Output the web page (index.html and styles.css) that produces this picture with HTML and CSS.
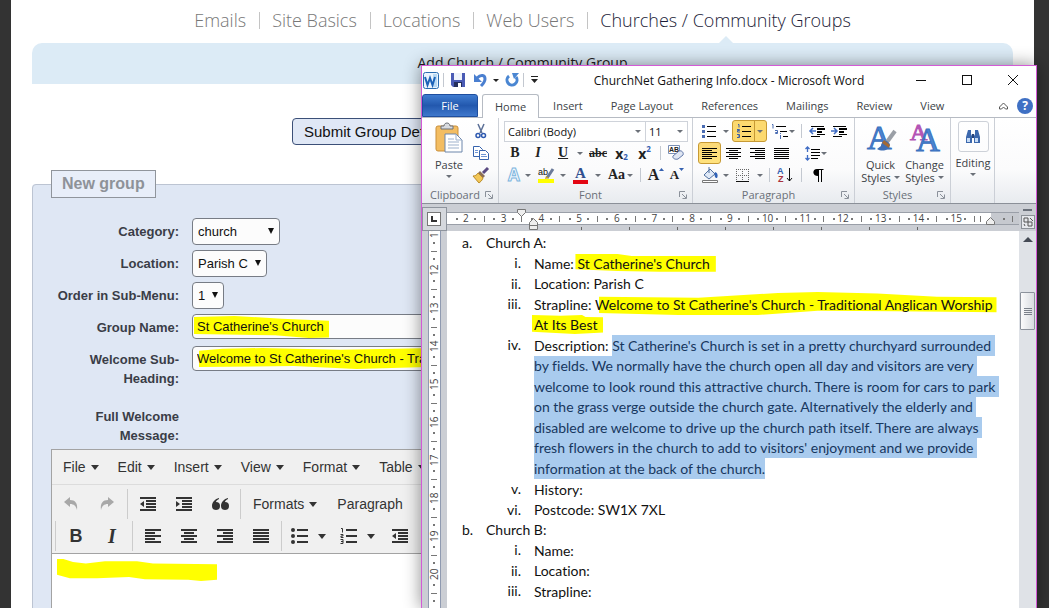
FILE: index.html
```html
<!DOCTYPE html>
<html lang="en">
<head>
  <meta charset="UTF-8" />
  <meta name="viewport" content="width=device-width, initial-scale=1.0" />
  <title>Add Church / Community Group</title>
  <link rel="stylesheet" href="styles.css">
</head>
<body>
  <!-- shared icons -->
  <svg class="sprite" aria-hidden="true">
    <symbol id="left" viewBox="0 0 16 14"><path d="M0 0h16v2H0zM0 3h10v2H0zM0 6h16v2H0zM0 9h10v2H0zM0 12h16v2H0z"/></symbol>
    <symbol id="center" viewBox="0 0 16 14"><path d="M0 0h16v2H0zM3 3h10v2H3zM0 6h16v2H0zM3 9h10v2H3zM0 12h16v2H0z"/></symbol>
    <symbol id="right" viewBox="0 0 16 14"><path d="M0 0h16v2H0zM6 3h10v2H6zM0 6h16v2H0zM6 9h10v2H6zM0 12h16v2H0z"/></symbol>
    <symbol id="full" viewBox="0 0 16 14"><path d="M0 0h16v2H0zM0 3h16v2H0zM0 6h16v2H0zM0 9h16v2H0zM0 12h16v2H0z"/></symbol>
    <symbol id="outdent" viewBox="0 0 16 14"><path d="M0 0h16v2H0zM6 3h10v2H6zM6 6h10v2H6zM6 9h10v2H6zM0 12h16v2H0zM4 4v6L0 7z"/></symbol>
    <symbol id="indent" viewBox="0 0 16 14"><path d="M0 0h16v2H0zM6 3h10v2H6zM6 6h10v2H6zM6 9h10v2H6zM0 12h16v2H0zM0 4v6l4-3z"/></symbol>
    <symbol id="w-left" viewBox="0 0 15 11"><path d="M0 0h15v1H0zM0 2h10v1H0zM0 4h15v1H0zM0 6h10v1H0zM0 8h15v1H0zM0 10h10v1H0z"/></symbol>
    <symbol id="w-center" viewBox="0 0 15 11"><path d="M0 0h15v1H0zM3 2h9v1H3zM0 4h15v1H0zM3 6h9v1H3zM0 8h15v1H0zM3 10h9v1H3z"/></symbol>
    <symbol id="w-right" viewBox="0 0 15 11"><path d="M0 0h15v1H0zM5 2h10v1H5zM0 4h15v1H0zM5 6h10v1H5zM0 8h15v1H0zM5 10h10v1H5z"/></symbol>
    <symbol id="w-full" viewBox="0 0 15 11"><path d="M0 0h15v1H0zM0 2h15v1H0zM0 4h15v1H0zM0 6h15v1H0zM0 8h15v1H0zM0 10h15v1H0z"/></symbol>
    <symbol id="launcher" viewBox="0 0 8 8"><path d="M.5 6V.5H6M3 3l4 4M7.500 3.500v4h-4" fill="none" stroke="#8b919a"/></symbol>
  </svg>

  <div class="page">
    <nav class="site-nav">
      <a href="#">Emails</a>
      <a href="#">Site Basics</a>
      <a href="#">Locations</a>
      <a href="#">Web Users</a>
      <a href="#" class="current">Churches / Community Groups</a>
    </nav>
    <div class="band">Add Church / Community Group</div>

    <form class="group-form">
      <button type="button" class="submit-btn">Submit Group Details</button>

      <fieldset>
        <legend>New group</legend>
        <div class="field">
          <label for="category">Category:</label>
          <span class="select-box category"><select id="category"><option>church</option></select></span>
        </div>
        <div class="field">
          <label for="location">Location:</label>
          <span class="select-box location"><select id="location"><option>Parish C</option></select></span>
        </div>
        <div class="field">
          <label for="order">Order in Sub-Menu:</label>
          <span class="select-box order"><select id="order"><option>1</option></select></span>
        </div>
        <div class="field">
          <label for="groupName">Group Name:</label>
          <span class="text-box name-mark"><input type="text" id="groupName" value="St Catherine's Church"></span>
        </div>
        <div class="field sub-heading">
          <label for="subHeading">Welcome Sub-Heading:</label>
          <span class="text-box heading-mark"><input type="text" id="subHeading" value="Welcome to St Catherine's Church - Traditional Anglican Worship At Its Best"></span>
        </div>
        <div class="field">
          <label for="message">Full Welcome Message:</label>
        </div>

        <div class="editor">
          <div class="menubar">
            <button type="button">File<i class="caret"></i></button>
            <button type="button">Edit<i class="caret"></i></button>
            <button type="button">Insert<i class="caret"></i></button>
            <button type="button">View<i class="caret"></i></button>
            <button type="button">Format<i class="caret"></i></button>
            <button type="button">Table<i class="caret"></i></button>
          </div>
          <div class="toolbar">
            <div class="tools">
              <div class="tool-group">
                <button type="button" class="off" aria-label="Undo"><svg width="14" height="14" viewBox="0 0 14 14"><path d="M0 5l6-5v3c5 0 8 3 7 10-1-4-3-6-7-6v3z"/></svg></button>
                <button type="button" class="off" aria-label="Redo"><svg width="14" height="14" viewBox="0 0 14 14"><path d="M14 5L8 0v3C3 3 0 6 1 13c1-4 3-6 7-6v3z"/></svg></button>
              </div>
              <div class="tool-group">
                <button type="button" aria-label="Decrease indent"><svg width="16" height="14"><use href="#outdent"/></svg></button>
                <button type="button" aria-label="Increase indent"><svg width="16" height="14"><use href="#indent"/></svg></button>
                <button type="button" aria-label="Quote"><svg width="17" height="12" viewBox="0 0 17 12"><path d="M7 0C3 1 0 4 0 8a4 4 0 1 0 4-4c0-1 1-2 3-3zM16 0c-4 1-7 4-7 8a4 4 0 1 0 4-4c0-1 1-2 3-3z"/></svg></button>
              </div>
              <div class="tool-group">
                <button type="button" class="text">Formats<i class="caret"></i></button>
                <button type="button" class="text block-format">Paragraph<i class="caret"></i></button>
              </div>
            </div>
            <div class="tools second">
              <div class="tool-group">
                <button type="button" class="bold">B</button>
                <button type="button" class="italic">I</button>
              </div>
              <div class="tool-group">
                <button type="button" aria-label="Align left"><svg width="16" height="14"><use href="#left"/></svg></button>
                <button type="button" aria-label="Align center"><svg width="16" height="14"><use href="#center"/></svg></button>
                <button type="button" aria-label="Align right"><svg width="16" height="14"><use href="#right"/></svg></button>
                <button type="button" aria-label="Justify"><svg width="16" height="14"><use href="#full"/></svg></button>
              </div>
              <div class="tool-group">
                <button type="button" class="split" aria-label="Bullet list"><svg width="17" height="16" viewBox="0 0 17 16"><circle cx="2" cy="2" r="2"/><circle cx="2" cy="8" r="2"/><circle cx="2" cy="14" r="2"/><path d="M6 1h11v2H6zM6 7h11v2H6zM6 13h11v2H6z"/></svg><i class="caret"></i></button>
                <button type="button" class="split" aria-label="Numbered list"><svg width="17" height="16" viewBox="0 0 17 16"><path d="M6 1h11v2H6zM6 7h11v2H6zM6 13h11v2H6z"/><path d="M1 .5h1.500v4M.5 6.500h2.500v1.500H1v1.500h2.500M.5 11.500h2.500v4H.5M1 13.500h2" fill="none" stroke="#333"/></svg><i class="caret"></i></button>
                <button type="button" aria-label="Decrease indent"><svg width="16" height="14"><use href="#outdent"/></svg></button>
              </div>
            </div>
          </div>
          <div class="editor-body" id="message"><div class="swipe"></div></div>
        </div>
      </fieldset>
    </form>
  </div>

  <div class="word">
    <div class="titlebar">
      <div class="quick">
        <svg width="16" height="17" viewBox="0 0 16 17"><rect x=".5" y=".5" width="15" height="16" rx="2" fill="#eaf4fd" stroke="#2a6db0"/><rect x="10" y="2" width="4" height="13" fill="#b9daf3"/><path d="M2 5l2.500 8L7 6l2.500 7L12 5" fill="none" stroke="#1c63b8" stroke-width="2"/></svg>
        <i class="bar"></i>
        <svg width="14" height="14" viewBox="0 0 14 14"><path d="M0 0h14v14H2l-2-2z" fill="#4a5bb5"/><path d="M3 0h8v7H3z" fill="#eef3fb"/><path d="M3 9h8v5H3z" fill="#252f5c"/><path d="M7 10h3v4H7z" fill="#fff"/></svg>
        <svg class="undo" width="13" height="14" viewBox="0 0 13 14"><path d="M3 5c4-4 8-3 8 1 0 3-2 5-4 7" fill="none" stroke="#4a7fd0" stroke-width="3"/><path d="M0 1v8h8z" fill="#4a7fd0"/></svg>
        <i class="caret black"></i>
        <svg class="redo" width="13" height="14" viewBox="0 0 13 14"><path d="M3 3a5 5 0 1 0 7 1" fill="none" stroke="#4a86d2" stroke-width="3"/><path d="M6 0h7l-5 6z" fill="#4a86d2"/></svg>
        <i class="bar"></i>
        <svg width="8" height="8" viewBox="0 0 8 8"><path d="M0 0h7v1H0zM0 3h7L3.500 7z" fill="#222"/></svg>
      </div>
      <div class="title">ChurchNet Gathering Info.docx - Microsoft Word</div>
      <div class="win-controls">
        <button type="button" aria-label="Minimize"><svg width="10" height="10"><path d="M0 5.500h10" stroke="#111"/></svg></button>
        <button type="button" aria-label="Maximize"><svg width="10" height="10"><rect x=".5" y=".5" width="9" height="9" fill="none" stroke="#111"/></svg></button>
        <button type="button" aria-label="Close"><svg width="10" height="10"><path d="M0 0l10 10M10 0L0 10" stroke="#111"/></svg></button>
      </div>
    </div>

    <div class="tabs">
      <button type="button" class="file-tab">File</button>
      <button type="button" class="active">Home</button>
      <button type="button">Insert</button>
      <button type="button">Page Layout</button>
      <button type="button">References</button>
      <button type="button">Mailings</button>
      <button type="button">Review</button>
      <button type="button">View</button>
      <div class="tab-end">
        <svg width="9" height="8" viewBox="0 0 9 8"><path d="M.5 5l4-4 4 4v2H6.500L4.500 5l-2 2H.5z" fill="none" stroke="#555"/></svg>
        <span class="help">?</span>
      </div>
    </div>

    <div class="ribbon">
      <div class="group clipboard">
        <div class="tools-area">
          <button type="button" class="big">
            <svg width="28" height="30" viewBox="0 0 28 30"><rect x="1" y="3" width="22" height="25" rx="2" fill="#f3bd62" stroke="#c98f3a"/><path d="M6 6V3h3c0-4 6-4 6 0h3v3z" fill="#d8dbe0" stroke="#6c7178"/><path d="M10 11h11l6 6v12H10z" fill="#fff" stroke="#6d86ab"/><path d="M21 11v6h6M13 16h6M13 19h11M13 22h11M13 25h11" fill="none" stroke="#9db1cc"/></svg>
            <span>Paste</span><i class="caret"></i>
          </button>
          <div class="stack">
            <button type="button" aria-label="Cut"><svg width="12" height="15" viewBox="0 0 12 15"><path d="M3 0l4 9M9 0L5 9" stroke="#5b6f96" stroke-width="1.500"/><circle cx="3" cy="11.500" r="2" fill="none" stroke="#2f5ab0" stroke-width="1.500"/><circle cx="8.500" cy="11.500" r="2" fill="none" stroke="#2f5ab0" stroke-width="1.500"/></svg></button>
            <button type="button" aria-label="Copy"><svg width="16" height="14" viewBox="0 0 16 14"><path d="M.5.5h6l3 3v7h-9z" fill="#fff" stroke="#3763ad"/><path d="M6.500 4.500h6l3 3v6h-9z" fill="#fff" stroke="#3763ad"/><path d="M2 4.500h3M2 6.500h3M8 8.500h5M8 10.500h6" stroke="#6f95d4"/></svg></button>
            <button type="button" aria-label="Format Painter"><svg width="16" height="15" viewBox="0 0 16 15"><path d="M15 0l-5 5" stroke="#5a4a82" stroke-width="3"/><path d="M7 3l5 5-2 2-5-5z" fill="#8b6f58"/><path d="M5 5l5 5c-1 3-3 4-4 5L0 8c2 0 4-1 5-3z" fill="#f3c757" stroke="#b98b2a"/></svg></button>
          </div>
        </div>
        <div class="group-name"><span>Clipboard</span><svg width="8" height="8"><use href="#launcher"/></svg></div>
      </div>

      <div class="group font">
        <div class="rows">
          <div class="row combos">
            <button type="button" class="combo">Calibri (Body)<i class="caret"></i></button>
            <button type="button" class="combo">11<i class="caret"></i></button>
          </div>
          <div class="row styles-row">
            <button type="button"><b>B</b></button>
            <button type="button"><em>I</em></button>
            <button type="button" class="drop"><u>U</u><i class="caret"></i></button>
            <button type="button"><s>abc</s></button>
            <button type="button" class="sub">x<sub>2</sub></button>
            <button type="button" class="sub">x<sup>2</sup></button>
            <i class="bar"></i>
            <button type="button" aria-label="Clear Formatting"><svg width="16" height="16" viewBox="0 0 16 16"><path d="M.5.5h11v8H.5z" fill="#fff" stroke="#7a8fb5"/><text x="1" y="7" font-family="Liberation Sans" font-size="7" fill="#222">AB</text><path d="M5 11l6-5c3-1 5 2 4 4l-5 4c-3 1-6-1-5-3z" fill="#dfe6f3" stroke="#6177a8"/></svg></button>
          </div>
          <div class="row color-row">
            <button type="button" class="drop"><span class="glow">A</span><i class="caret"></i></button>
            <button type="button" class="drop"><svg width="18" height="16" viewBox="0 0 18 16"><path d="M0 12h16v4H0z" fill="#ff0"/><text x="0" y="8" font-family="Liberation Sans" font-size="9" fill="#111">ab</text><path d="M15 2L9 11" stroke="#6b7b99" stroke-width="3"/><path d="M8 9l3 2-4 1z" fill="#c9a227"/></svg><i class="caret"></i></button>
            <button type="button" class="drop"><span class="font-color">A</span><i class="caret"></i></button>
            <button type="button" class="drop"><span class="serif">Aa</span><i class="caret"></i></button>
            <i class="bar"></i>
            <button type="button" class="grow"><span>A</span><svg width="5" height="3"><path d="M0 3l2.500-3L5 3z" fill="#3561b0"/></svg></button>
            <button type="button" class="grow shrink"><span>A</span><svg width="5" height="3"><path d="M0 0l2.500 3L5 0z" fill="#3561b0"/></svg></button>
          </div>
        </div>
        <div class="group-name"><span>Font</span><svg width="8" height="8"><use href="#launcher"/></svg></div>
      </div>

      <div class="group paragraph">
        <div class="rows">
          <div class="row list-row">
            <button type="button" class="drop" aria-label="Bullets"><svg width="14" height="13" viewBox="0 0 14 13"><path d="M5 1h9v1H5zM5 6h9v1H5zM5 11h9v1H5z"/><path d="M0 0h3v3H0zM0 5h3v3H0zM0 10h3v3H0z" fill="#4a6cb3"/></svg><i class="caret"></i></button>
            <button type="button" class="drop on" aria-label="Numbering"><svg width="14" height="14" viewBox="0 0 14 14"><path d="M5 2h9v1H5zM5 7h9v1H5zM5 12h9v1H5z"/><path d="M1 .5h1v3M0 5.500h2.500v1H.5v1.500H3M0 10.500h2.500v3H0M1 12h1" fill="none" stroke="#3a5fa8"/></svg><i class="caret"></i></button>
            <button type="button" class="drop" aria-label="Multilevel List"><svg width="17" height="15" viewBox="0 0 17 15"><path d="M5 2h10v1H5zM9 7h7v1H9zM12 12h5v1h-5z"/><path d="M1 .5h1v4M4 6.500h2.500v3H4.500v-1h2M9.500 11v4M9.500 9v1" fill="none" stroke="#4a6cb3"/></svg><i class="caret"></i></button>
            <i class="bar"></i>
            <button type="button" aria-label="Decrease Indent"><svg width="16" height="13" viewBox="0 0 16 13"><path d="M2 1h13v1H2zM8 3h8v2H8zM8 6h5v2H8zM8 9h8v1H8zM2 11h9v1H2z"/><path d="M7 6H1M4 3L1 6l3 3" fill="none" stroke="#3f6cc4" stroke-width="1.500"/></svg></button>
            <button type="button" aria-label="Increase Indent"><svg width="16" height="13" viewBox="0 0 16 13"><path d="M2 1h13v1H2zM8 3h8v2H8zM8 6h5v2H8zM8 9h8v1H8zM2 11h9v1H2z"/><path d="M0 6h6M3 3l3 3-3 3" fill="none" stroke="#3f6cc4" stroke-width="1.500"/></svg></button>
          </div>
          <div class="row align-row">
            <button type="button" class="on" aria-label="Align Left"><svg width="15" height="11"><use href="#w-left"/></svg></button>
            <button type="button" aria-label="Center"><svg width="15" height="11"><use href="#w-center"/></svg></button>
            <button type="button" aria-label="Align Right"><svg width="15" height="11"><use href="#w-right"/></svg></button>
            <button type="button" aria-label="Justify"><svg width="15" height="11"><use href="#w-full"/></svg></button>
            <i></i>
            <button type="button" class="drop" aria-label="Line Spacing"><svg width="15" height="15" viewBox="0 0 15 15"><path d="M6 3h9v1H6zM6 6h9v1H6zM6 9h9v1H6zM6 12h7v1H6z"/><path d="M2.500 1v5M.5 3l2-2 2 2M2.500 9v5M.5 12l2 2 2-2" fill="none" stroke="#3f6cc4" stroke-width="1.300"/></svg><i class="caret"></i></button>
          </div>
          <div class="row shade-row">
            <button type="button" class="drop" aria-label="Shading"><svg width="17" height="16" viewBox="0 0 17 16"><path d="M2 8l6-6 5 5-6 5z" fill="#dfe9f7" stroke="#51709f"/><path d="M7 0v6" stroke="#51709f"/><path d="M13 5c3 1 3 4 2 6-2 0-3-2-2-6z" fill="#2f62b8"/><path d="M.5 13.500h15v2H.5z" fill="#fff" stroke="#777"/></svg><i class="caret"></i></button>
            <button type="button" class="drop" aria-label="Borders"><svg width="13" height="13" viewBox="0 0 13 13"><path d="M0 .5h13M0 6.500h13M.5 0v12M6.500 0v12M12.500 0v12" stroke="#666" stroke-dasharray="1 1"/><path d="M0 12.500h13" stroke="#111"/></svg><i class="caret"></i></button>
            <i class="bar"></i>
            <button type="button" aria-label="Sort"><svg width="16" height="16" viewBox="0 0 16 16"><text x="0" y="7" font-family="Liberation Sans" font-weight="bold" font-size="9" fill="#3561b0">A</text><text x="1" y="15" font-family="Liberation Sans" font-weight="bold" font-size="9" fill="#a8323e">Z</text><path d="M12.500 1v13M10 11l2.500 3 2.500-3" fill="none" stroke="#111"/></svg></button>
            <i class="bar"></i>
            <button type="button" aria-label="Show marks"><svg width="11" height="13" viewBox="0 0 11 13"><path d="M10.500 0v1H9v12H8V1H6v12H5V7C-1 7-1 0 4 0z"/></svg></button>
          </div>
        </div>
        <div class="group-name"><span>Paragraph</span><svg width="8" height="8"><use href="#launcher"/></svg></div>
      </div>

      <div class="group styles">
        <div class="tools-area">
          <button type="button" class="big">
            <svg width="30" height="30" viewBox="0 0 30 30"><text x="1" y="26" font-family="Liberation Serif" font-size="34" fill="#4a86d2" stroke="#3a70be">A</text><path d="M29 8L21 19" stroke="#9a9fa6" stroke-width="4"/><path d="M21 18c-3-1-6 2-6 5l-4 3c5 3 12 2 13-5z" fill="#3f6fb5"/><path d="M18 17l6 5-1 3-7-5z" fill="#a36a35"/></svg>
            <span>Quick</span><span class="second-line">Styles<i class="caret"></i></span>
          </button>
          <button type="button" class="big">
            <svg width="30" height="30" viewBox="0 0 30 30"><text x="0" y="17" font-family="Liberation Serif" font-size="24" fill="#b455b5" stroke="#b455b5">A</text><text x="6" y="28" font-family="Liberation Serif" font-size="33" fill="#4a86d2" stroke="#3a70be">A</text></svg>
            <span>Change</span><span class="second-line">Styles<i class="caret"></i></span>
          </button>
        </div>
        <div class="group-name"><span>Styles</span><svg width="8" height="8"><use href="#launcher"/></svg></div>
      </div>

      <div class="group editing">
        <button type="button" class="big">
          <span class="frame"><svg width="16" height="14" viewBox="0 0 16 14"><path d="M3 0h3v4l1 2v7H1V7zM10 0h3l2 7v6H9V6l1-2z" fill="#3c68ad"/><path d="M7 4h2v4H7z" fill="#28457a"/><path d="M2 8h3v4H2zM10 8h3v4h-3z" fill="#c6dbf5"/></svg></span>
          <span>Editing</span><i class="caret"></i>
        </button>
      </div>
    </div>

    <div class="workspace">
      <div class="tab-stop"><span><svg width="6" height="6"><path d="M1 0v5h5" fill="none" stroke="#333" stroke-width="2"/></svg></span></div>
      <div class="top-ruler">
        <div class="scale">
          <div class="numbers">
            <span>2</span><span>3</span><span>4</span><span>5</span><span>6</span><span>7</span><span>8</span><span>9</span><span>10</span><span>11</span><span>12</span><span>13</span><span>14</span><span>15</span>
          </div>
          <div class="rest"></div>
          <div class="outside"></div>
          <svg class="first-indent" width="10" height="8"><path d="M.5.5h8v3l-4 4-4-4z" fill="#eee" stroke="#777"/></svg>
          <svg class="left-indent" width="10" height="14"><path d="M.5 5.500l4-4 4 4v7h-8zM.5 8.500h8" fill="#eee" stroke="#777"/></svg>
          <svg class="right-indent" width="10" height="8"><path d="M.5 7.500v-3l4-4 4 4v3z" fill="#eee" stroke="#777"/></svg>
        </div>
        <div class="stops"></div>
      </div>
      <div class="scroll-top">
        <i></i>
        <svg width="14" height="14"><rect x=".5" y=".5" width="13" height="13" fill="#e6e8ec" stroke="#8b9097"/><path d="M3 3h4v4H3zM7 7h4v4H7zM4 11l-1-2M9 3l3 3" fill="none" stroke="#555"/></svg>
      </div>
      <div class="side-ruler">
        <div class="side-numbers">
          <span>11</span><span>12</span><span>13</span><span>14</span><span>15</span><span>16</span><span>17</span><span>18</span><span>19</span><span>20</span><span>21</span>
        </div>
      </div>
      <div class="document">
        <div class="church"><span>a.</span><span>Church A:</span></div>
        <ol>
          <li><span class="num">i.</span><span class="line">Name: <mark class="m-name">St Catherine's Church</mark></span></li>
          <li><span class="num">ii.</span><span class="line">Location: Parish C</span></li>
          <li><span class="num">iii.</span><div class="lines"><span class="line">Strapline: <mark class="m-strap">Welcome to St Catherine's Church - Traditional Anglican Worship</mark></span><span class="line"><mark class="m-best">At Its Best</mark></span></div></li>
          <li><span class="num">iv.</span><div class="lines"><span class="line">Description: <span class="sel">St Catherine's Church is set in a pretty churchyard surrounded </span></span><span class="line"><span class="sel">by fields. We normally have the church open all day and visitors are very </span></span><span class="line"><span class="sel">welcome to look round this attractive church. There is room for cars to park </span></span><span class="line"><span class="sel">on the grass verge outside the church gate. Alternatively the elderly and </span></span><span class="line"><span class="sel">disabled are welcome to drive up the church path itself. There are always </span></span><span class="line"><span class="sel">fresh flowers in the church to add to visitors' enjoyment and we provide </span></span><span class="line"><span class="sel">information at the back of the church.</span></span></div></li>
          <li><span class="num">v.</span><span class="line">History:</span></li>
          <li><span class="num">vi.</span><span class="line">Postcode: SW1X 7XL</span></li>
        </ol>
        <div class="church"><span>b.</span><span>Church B:</span></div>
        <ol>
          <li><span class="num">i.</span><span class="line">Name:</span></li>
          <li><span class="num">ii.</span><span class="line">Location:</span></li>
          <li><span class="num">iii.</span><span class="line">Strapline:</span></li>
        </ol>
      </div>
      <div class="scrollbar">
        <svg width="10" height="5"><path d="M0 5l5-5 5 5z" fill="#444a55"/></svg>
        <div class="thumb"><i></i><i></i><i></i><i></i></div>
      </div>
    </div>
  </div>
</body>
</html>
```
FILE: styles.css
```css
* {
  box-sizing: border-box;
}
body {
  margin: 0;
  height: 100vh;
  overflow: hidden;
  position: relative;
  background: #333;
  font-family: "Liberation Sans", Arial, sans-serif;
}
button {
  border: 0;
  padding: 0;
  background: none;
  font-family: inherit;
  color: inherit;
}
svg {
  display: block;
  flex-shrink: 0;
  overflow: visible;
}
.sprite {
  position: absolute;
  width: 0;
  height: 0;
}
.caret {
  flex-shrink: 0;
  border: 4px solid transparent;
  border-top: 5px solid #333;
  border-bottom: 0;
}

/* web page behind */
.page {
  margin: 0 15px 0 11px;
  padding: 0 21px;
  height: 100vh;
  overflow: hidden;
  background: #fff;
}
.site-nav {
  display: flex;
  justify-content: center;
  padding-top: 8px;
  height: 43px;
  font-family: "Open Sans", sans-serif;
  font-weight: 300;
  font-size: 18px;
  line-height: 24px;
}
.site-nav a {
  position: relative;
  color: #777;
  text-decoration: none;
  padding: 0 13px;
  white-space: nowrap;
}
.site-nav a + a::before {
  content: "";
  position: absolute;
  left: 0;
  top: 4px;
  height: 17px;
  border-left: 1px solid #c4c4c4;
}
.site-nav .current {
  color: #1c1c38;
}
.site-nav .current::after {
  content: "";
  position: absolute;
  left: 50%;
  bottom: 0;
  margin-left: -7px;
  border: 7px solid transparent;
  border-top: 0;
  border-bottom-color: #dcebf6;
}
.band {
  height: 41px;
  padding-top: 9px;
  border-radius: 10px 10px 0 0;
  background: #dcebf6;
  font-family: "Open Sans", sans-serif;
  font-size: 14px;
  line-height: 22px;
  text-align: center;
  color: #222;
}
.submit-btn {
  display: block;
  height: 27px;
  margin: 34px 0 25px 260px;
  padding: 0 11px;
  border: 1px solid #3c5078;
  border-radius: 4px;
  background: #e0e8f6;
  font-size: 15px;
  color: #111;
}
fieldset {
  margin: 0;
  padding: 20px 18px 0;
  border: 1px solid #bcc4d2;
  border-radius: 4px;
  background: #dfe7f4;
}
legend {
  height: 28px;
  padding: 0 10px;
  border: 1px solid #90959c;
  background: #e8eef9;
  font-size: 16px;
  font-weight: bold;
  line-height: 26px;
  color: #8e9298;
}
.field {
  display: grid;
  grid-template-columns: 128px 1fr;
  column-gap: 13px;
  align-items: start;
  min-height: 27px;
  margin-bottom: 5px;
}
.field label {
  padding-top: 4px;
  font-size: 13px;
  font-weight: bold;
  line-height: 19px;
  text-align: right;
  color: #3a3d47;
}
.sub-heading {
  margin-bottom: 15px;
}
.select-box {
  position: relative;
  height: 27px;
}
.category { width: 88px; }
.location { width: 75px; }
.order { width: 32px; }
.select-box::after {
  content: "";
  position: absolute;
  right: 6px;
  top: 10px;
  border: 3px solid transparent;
  border-top: 6px solid #111;
  border-bottom: 0;
}
.select-box select {
  appearance: none;
  width: 100%;
  height: 27px;
  padding: 0 5px;
  border: 1px solid #777c85;
  border-radius: 4px;
  background: #fcfcfc;
  font-family: inherit;
  font-size: 13px;
  color: #111;
}
.text-box {
  position: relative;
  height: 25px;
  border: 1px solid #777c85;
  border-radius: 4px;
  background: #fcfcfc;
}
.text-box input {
  position: relative;
  width: 100%;
  height: 23px;
  padding: 0 4px;
  border: 0;
  background: transparent;
  font-family: inherit;
  font-size: 13px;
  color: #111;
}
.text-box::before {
  content: "";
  position: absolute;
  left: 1px;
  top: 1px;
  height: 22px;
  background: #ff0;
}
.name-mark::before {
  width: 135px;
  clip-path: polygon(0 5%, 30% 0, 65% 12%, 100% 22%, 100% 98%, 85% 100%, 60% 88%, 0 82%);
}
.heading-mark::before {
  left: 6px;
  right: 6px;
  clip-path: polygon(0 12%, 3% 3%, 8% 0, 18% 8%, 30% 0, 100% 0, 100% 85%, 30% 85%, 20% 95%, 12% 82%, 0 86%);
}

/* rich text editor */
.editor {
  margin-top: -1px;
  border: 1px solid #a3a3a3;
  background: #f0f0f0;
  font-size: 14px;
  color: #333;
}
.editor button {
  display: flex;
  align-items: center;
  justify-content: center;
  gap: 5px;
  height: 30px;
  font-size: 14px;
  fill: #333;
}
.menubar {
  display: flex;
  gap: 1px;
  padding: 2px;
  border-bottom: 1px solid #dcdcdc;
}
.menubar button {
  padding: 0 9px;
}
.toolbar {
  padding: 4px 0 2px 1px;
  border-bottom: 1px solid #a3a3a3;
}
.tools {
  display: flex;
}
.second {
  margin: 2px 0 0 2px;
}
.tool-group {
  display: flex;
  padding: 0 2px 0 0;
}
.tool-group + .tool-group,
.second .tool-group {
  border-left: 1px solid #ccc;
  padding-left: 2px;
}
.tool-group button {
  width: 36px;
}
.tool-group .text {
  width: auto;
  padding: 0 10px;
}
.tool-group .block-format {
  width: 140px;
  justify-content: space-between;
}
.tool-group .split {
  width: 49px;
  gap: 10px;
}
.tool-group .off {
  fill: #a8a8a8;
}
.editor .bold {
  font-size: 18px;
  font-weight: bold;
}
.editor .italic {
  font-family: "Liberation Serif", serif;
  font-size: 20px;
  font-style: italic;
  font-weight: bold;
}
.editor-body {
  height: 200px;
  padding: 5px;
  background: #fff;
}
.swipe {
  width: 160px;
  height: 22px;
  background: #ff0;
  clip-path: polygon(0 0, 4% 0, 10% 14%, 18% 20%, 30% 10%, 50% 10%, 60% 20%, 100% 24%, 100% 94%, 90% 100%, 82% 94%, 55% 92%, 45% 82%, 25% 88%, 8% 88%, 0 72%);
}

/* word window */
.word {
  position: absolute;
  left: 421px;
  right: 12px;
  top: 65px;
  bottom: 0;
  display: flex;
  flex-direction: column;
  border: 1px solid #d45ad6;
  border-bottom: 0;
  background: #fff;
  box-shadow: 0 0 16px rgba(0, 0, 0, 0.45);
  font-family: "Open Sans", sans-serif;
  font-size: 11px;
  color: #3b3f46;
}
.word button {
  font-size: 11px;
}
.word .caret {
  border-width: 3px;
  border-top: 3px solid #6b7078;
  border-bottom: 0;
}
.word .black {
  border-top-color: #222;
}
.bar {
  width: 1px;
  height: 14px;
  background: #c3c8d0;
}
.titlebar {
  display: grid;
  grid-template-columns: 1fr auto 1fr;
  align-items: center;
  height: 28px;
}
.quick {
  display: flex;
  align-items: center;
  gap: 7px;
  padding-left: 1px;
}
.quick .bar {
  margin: 0 0 0 -3px;
}
.quick .caret {
  margin-left: -1px;
}
.undo {
  margin-left: 2px;
}
.title {
  font-size: 12px;
  color: #111;
}
.win-controls {
  display: flex;
  justify-content: flex-end;
}
.win-controls button {
  display: flex;
  align-items: center;
  justify-content: center;
  width: 46px;
  height: 28px;
}
.tabs {
  display: flex;
  height: 24px;
  border-bottom: 1px solid #b6bbc3;
}
.tabs button {
  padding: 0 14px;
}
.tabs .file-tab {
  width: 56px;
  margin-right: 4px;
  border: 1px solid #1f4e9e;
  border-radius: 3px 3px 0 0;
  background: linear-gradient(#3f7cd0, #2358ae 50%, #3f78cc);
  color: #fff;
}
.tabs .active {
  height: 24px;
  padding: 0 12px;
  border: 1px solid #b6bbc3;
  border-bottom: 0;
  border-radius: 3px 3px 0 0;
  background: #fff;
}
.tab-end {
  display: flex;
  align-items: center;
  gap: 9px;
  margin-left: auto;
  padding-right: 3px;
}
.help {
  width: 16px;
  height: 16px;
  border-radius: 50%;
  background: #3f70c4;
  color: #fff;
  font-size: 12px;
  font-weight: bold;
  line-height: 16px;
  text-align: center;
}
.ribbon {
  display: flex;
  height: 86px;
  border-bottom: 1px solid #8b9098;
  background: linear-gradient(#fff, #fbfbfc 60%, #e8ebef);
}
.group {
  display: flex;
  flex-direction: column;
  justify-content: space-between;
  padding-top: 2px;
  border-right: 1px solid #cbcfd6;
}
.group-name {
  display: flex;
  align-items: center;
  height: 17px;
  padding: 0 5px 0 3px;
  color: #6a6f78;
}
.group-name span {
  flex: 1;
  text-align: center;
}
.clipboard { width: 77px; }
.font { width: 194px; }
.paragraph { width: 162px; }
.styles { width: 96px; }
.editing { width: 44px; }
.tools-area {
  display: flex;
  justify-content: center;
}
.clipboard .tools-area {
  justify-content: space-between;
  padding: 0 6px 0 12px;
}
.big {
  display: flex;
  flex-direction: column;
  align-items: center;
  width: 44px;
  padding-top: 3px;
  line-height: 13px;
}
.clipboard .big {
  width: 30px;
}
.big > svg {
  margin-bottom: 5px;
}
.clipboard .big .caret {
  margin-top: 4px;
}
.second-line {
  display: flex;
  align-items: center;
  gap: 3px;
}
.editing .big {
  padding-top: 1px;
}
.editing .frame {
  display: flex;
  align-items: center;
  justify-content: center;
  width: 31px;
  height: 31px;
  margin-bottom: 4px;
  border: 1px solid #cdd1d8;
  border-radius: 3px;
}
.editing .caret {
  margin-top: 4px;
}
.stack button,
.row button {
  display: flex;
  align-items: center;
  justify-content: center;
  height: 22px;
}
.stack button {
  width: 22px;
}
.rows {
  padding: 0 5px;
}
.row {
  display: grid;
  align-items: center;
  height: 22px;
}
.row .bar {
  justify-self: center;
}
.row .drop {
  justify-content: space-between;
  padding: 0 3px 0 4px;
}
.combos { grid-template-columns: 142px 42px; }
.styles-row { grid-template-columns: 22px 24px 36px 24px 23px 23px 9px 22px; }
.color-row { grid-template-columns: 30px 35px 35px 32px 9px 22px 20px; }
.list-row { grid-template-columns: 34px 35px 31px 7px 23px 21px; }
.align-row { grid-template-columns: 23px 24px 24px 24px 8px 29px; }
.shade-row { grid-template-columns: 34px 34px 7px 24px 9px 24px; }
.word .combo {
  justify-content: space-between;
  height: 21px;
  padding: 0 4px 0 3px;
  border: 1px solid #cfd3da;
  background: #fff;
  color: #111;
}
.combo + .combo {
  border-left: 0;
}
.styles-row button,
.serif,
.font-color,
.grow {
  font-family: "Liberation Serif", serif;
  font-weight: bold;
  color: #222;
}
.word .styles-row button {
  font-size: 14px;
}
.word .styles-row s {
  font-size: 12px;
}
.styles-row u {
  padding-left: 4px;
}
.styles-row .sub {
  font-family: "Open Sans", sans-serif;
}
.sub sub,
.sub sup {
  font-size: 8px;
  line-height: 8px;
  color: #2f5ab0;
}
.sub sub {
  align-self: flex-end;
  margin-bottom: 3px;
}
.sub sup {
  align-self: flex-start;
  margin-top: 3px;
}
.glow {
  font-size: 17px;
  line-height: 20px;
  font-weight: bold;
  color: #eef7fd;
  -webkit-text-stroke: 1px #7eb5de;
}
.font-color {
  padding: 0 2px;
  border-bottom: 4px solid #e30613;
  font-size: 15px;
  line-height: 13px;
  color: #2f4f8f;
}
.serif {
  font-size: 14px;
}
.grow span {
  font-size: 16px;
}
.shrink span {
  font-size: 13px;
}
.grow svg {
  align-self: flex-start;
  margin-top: 4px;
}
.word .on {
  border: 1px solid #c79a34;
  border-radius: 3px;
  background: linear-gradient(#fbd978, #ffe27d);
}
.list-row .on {
  background: linear-gradient(90deg, transparent 21px, #c79a34 21px, #c79a34 22px, transparent 22px), #fcd96f;
}

/* rulers and document */
.workspace {
  flex: 1;
  min-height: 0;
  display: grid;
  grid-template-columns: 25px 1fr 17px;
  grid-template-rows: 27px 1fr;
  background: #cbced4;
}
.tab-stop {
  margin-top: 3px;
  padding: 4px;
  border: 1px solid #8e949d;
  background: #d5d8dd;
}
.tab-stop span {
  display: flex;
  align-items: center;
  justify-content: center;
  width: 14px;
  height: 14px;
  border: 1px solid #777;
  background: #fff;
}
.top-ruler {
  padding-top: 8px;
}
.scale {
  position: relative;
  display: flex;
  height: 13px;
  border-top: 1px solid #9a9fa8;
  border-bottom: 1px solid #9a9fa8;
  background: #fff;
}
.numbers {
  flex: 1;
  display: flex;
}
.numbers span,
.rest,
.outside {
  font-size: 10px;
  line-height: 11px;
  text-align: center;
  color: #444;
  background-image: linear-gradient(#777, #777), linear-gradient(#777, #777), linear-gradient(#777, #777);
  background-repeat: no-repeat;
  background-size: 1px 6px, 2px 2px, 2px 2px;
  background-position: 100% 50%, 24% 50%, 76% 50%;
}
.numbers span {
  flex: 1;
}
.rest {
  width: 16px;
  background-position: 5px 50%, 14px 50%, 14px 50%;
}
.outside {
  width: 28px;
  background-color: #c6c9cf;
  background-position: 21px 50%, 12px 50%, 12px 50%;
}
.first-indent {
  position: absolute;
  left: 70px;
  top: -4px;
}
.left-indent {
  position: absolute;
  left: 82px;
  top: 4px;
}
.right-indent {
  position: absolute;
  right: 23px;
  top: 4px;
}
.stops {
  height: 3px;
  margin: 2px 54px 0 134px;
  background: repeating-linear-gradient(90deg, #666 0, #666 1px, transparent 1px, transparent 48px);
}
.scroll-top {
  display: flex;
  flex-direction: column;
  align-items: center;
  padding-top: 5px;
}
.scroll-top i {
  width: 9px;
  height: 2px;
  margin-bottom: 4px;
  background: #6a707a;
}
.side-ruler {
  min-height: 0;
  padding-left: 6px;
  overflow: hidden;
}
.side-numbers {
  width: 13px;
  margin-top: -19px;
  border: 1px solid #8f9ab0;
  background: #fff;
}
.side-numbers span {
  display: block;
  width: 11px;
  height: 38px;
  font-size: 10px;
  line-height: 11px;
  text-align: center;
  color: #444;
  writing-mode: vertical-rl;
  transform: rotate(180deg);
  background-image: linear-gradient(#777, #777), linear-gradient(#777, #777), linear-gradient(#777, #777);
  background-repeat: no-repeat;
  background-size: 6px 1px, 2px 2px, 2px 2px;
  background-position: 50% 100%, 50% 20%, 50% 80%;
}
.document {
  min-width: 0;
  min-height: 0;
  overflow: hidden;
  padding: 2px 0 0 15px;
  background: #fff;
  font-family: Lato, sans-serif;
  font-size: 14px;
  font-variant-ligatures: none;
  line-height: 20px;
  color: #111;
}
.document ol {
  margin: 0 0 0 24px;
  padding: 0;
  list-style: none;
}
.church {
  display: grid;
  grid-template-columns: 24px 1fr;
}
.document li {
  display: grid;
  grid-template-columns: 35px 1fr;
  column-gap: 13px;
}
.num {
  text-align: right;
}
.line {
  display: block;
  line-height: 21px;
  white-space: pre;
}
.lines .line:nth-child(even),
li:nth-child(even) > .line {
  line-height: 20px;
}
.document mark {
  position: relative;
  z-index: 0;
  background: none;
  color: inherit;
}
.document mark::before {
  content: "";
  position: absolute;
  z-index: -1;
  left: -2px;
  right: -6px;
  top: -1px;
  bottom: -1px;
  background: #ff0;
}
.document .m-name::before {
  clip-path: polygon(0 0, 30% 0, 40% 10%, 100% 10%, 100% 94%, 60% 94%, 30% 90%, 0 80%);
}
.document .m-strap::before {
  left: 4px;
  right: -4px;
  top: -4px;
  bottom: -3px;
  clip-path: polygon(0 20%, 25% 24%, 45% 4%, 55% 0, 70% 6%, 85% 20%, 100% 22%, 100% 84%, 75% 80%, 55% 78%, 40% 96%, 20% 96%, 0 88%);
}
.document .m-best::before {
  clip-path: polygon(0 0, 40% 4%, 70% 0, 75% 10%, 100% 12%, 100% 92%, 60% 100%, 0 88%);
}
.sel {
  display: inline-block;
  background: #a9cbee;
  color: #17375e;
}
.scrollbar {
  display: flex;
  flex-direction: column;
  align-items: center;
  padding-top: 6px;
  background: #dfe2e7;
}
.thumb {
  display: flex;
  flex-direction: column;
  align-items: center;
  justify-content: center;
  gap: 1px;
  width: 15px;
  height: 38px;
  margin-top: 50px;
  border: 1px solid #8c929c;
  border-radius: 1px;
  background: linear-gradient(90deg, #fbfbfc, #d8dbe0);
}
.thumb i {
  width: 8px;
  height: 1px;
  background: #7a808a;
}
```
